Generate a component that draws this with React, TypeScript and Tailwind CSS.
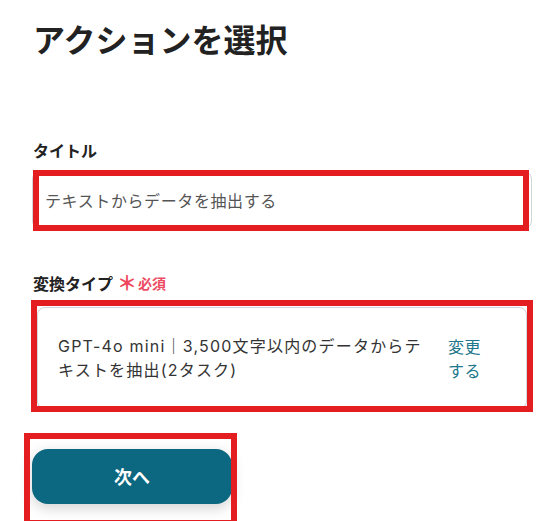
export default function App() {
  return (
    <div
      className="w-[559px] h-[521px] overflow-hidden bg-white text-[#222]"
      style={{ fontFamily: '"Noto Sans CJK JP", "Noto Sans", sans-serif' }}
    >
      <div className="pl-[33px] pt-[14px]">
        <h1 className="text-[32px] leading-[48px] font-bold text-[#222]">アクションを選択</h1>

        {/* タイトル */}
        <div className="mt-[76px]">
          <p className="text-[16px] leading-[24px] font-bold">タイトル</p>
          <div className="relative mt-[9px] -ml-[1px] w-[500px]">
            <div className="h-[58px] rounded-lg border border-gray-300 bg-white flex items-center pl-[12px] text-[16px] tracking-[0.6px] text-[#555]">
              テキストからデータを抽出する
            </div>
            <div className="absolute left-[1px] right-[3px] -top-[1px] -bottom-[2px] border-[6px] border-[#e41d21]" />
          </div>
        </div>

        {/* 変換タイプ */}
        <div className="mt-[42px]">
          <p className="text-[16px] leading-[24px] font-bold flex items-center">
            変換タイプ
            <span className="ml-[4px] text-[20px] leading-none text-[#f0455d] font-bold">＊</span>
            <span className="ml-[1px] text-[14px] text-[#ec4c63] font-bold">必須</span>
          </p>
          <div className="relative mt-[12px] ml-[4px] w-[490px]">
            <div className="rounded-lg border border-gray-300 bg-white shadow-sm flex items-center pl-[20px] py-[26px] text-[16px] leading-[24px]">
              <p
                className="w-[370px] text-[#333] tracking-[1.2px]"
                style={{ fontFamily: 'Inter, "Noto Sans CJK JP", sans-serif' }}
              >
                GPT-4o mini｜3,500文字以内のデータからテキストを抽出(2タスク)
              </p>
              <p className="ml-[20px] w-[36px] text-[#20768a] tracking-[0.6px]">変更する</p>
            </div>
            <div className="absolute -left-[6px] -right-[6px] -top-[7px] -bottom-[3px] border-[6px] border-[#e41d21]" />
          </div>
        </div>

        {/* 次へ */}
        <div className="relative mt-[40px] -ml-[1px] w-[200px]">
          <button className="w-[200px] h-[55px] rounded-2xl bg-[#0c6880] text-white text-[18px] font-bold shadow-[0_4px_14px_rgba(0,0,0,0.18)]">
            次へ
          </button>
          <div className="absolute -left-[8px] -right-[5px] -top-[16px] -bottom-[22px] border-[6px] border-[#e41d21]" />
        </div>
      </div>
    </div>
  );
}
